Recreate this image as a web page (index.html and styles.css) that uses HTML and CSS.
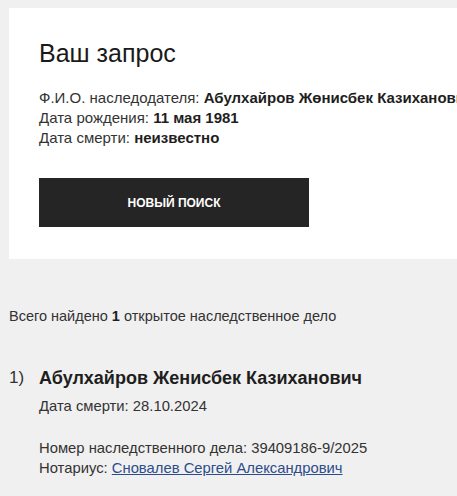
FILE: index.html
```html
<!DOCTYPE html>
<html lang="ru">
<head>
<meta charset="utf-8">
<link rel="stylesheet" href="styles.css">
</head>
<body>
<div class="page">
  <section class="card">
    <h1 class="title">Ваш запрос</h1>
    <div class="query">
      <div>Ф.И.О. наследодателя: <b>Абулхайров Жөнисбек Казиханович</b></div>
      <div>Дата рождения: <b>11 мая 1981</b></div>
      <div>Дата смерти: <b>неизвестно</b></div>
    </div>
    <button class="btn">НОВЫЙ ПОИСК</button>
  </section>
  <p class="total">Всего найдено <b>1</b> открытое наследственное дело</p>
  <ol class="results">
    <li class="item">
      <span class="num">1)</span>
      <div class="info">
        <div class="name">Абулхайров Женисбек Казиханович</div>
        <div class="line">Дата смерти: 28.10.2024</div>
        <div class="case">
          <div class="line">Номер наследственного дела: 39409186-9/2025</div>
          <div class="line">Нотариус: <a href="#" class="link">Сновалев Сергей Александрович</a></div>
        </div>
      </div>
    </li>
  </ol>
</div>
</body>
</html>
```
FILE: styles.css
```css
html, body {
  margin: 0;
  padding: 0;
  overflow: hidden;
}
body {
  background: #f0f0f0;
  font-family: "Liberation Sans", Arial, sans-serif;
  color: #333;
}
b {
  color: #1e1e1e;
}
.page {
  padding: 8px 0 0 9px;
}
.card {
  background: #fff;
  width: 560px;
  padding: 30px 30px 32px;
  box-sizing: border-box;
}
.title {
  margin: 0;
  font-size: 25px;
  font-weight: normal;
  line-height: 30px;
  color: #1a1a1a;
}
.query {
  margin-top: 20px;
  font-size: 15px;
  line-height: 20px;
  white-space: nowrap;
}
.btn {
  display: block;
  margin-top: 30px;
  width: 270px;
  height: 49px;
  background: #252525;
  color: #fff;
  border: 0;
  font-family: inherit;
  font-size: 12px;
  font-weight: bold;
}
.total {
  margin: 47px 0 0;
  font-size: 14.5px;
  line-height: 20px;
}
.results {
  list-style: none;
  margin: 39px 0 0;
  padding: 0;
}
.item {
  display: flex;
}
.num {
  width: 30px;
  font-size: 17px;
  line-height: 26px;
}
.name {
  font-size: 18px;
  font-weight: bold;
  line-height: 26px;
  color: #1e1e1e;
}
.line {
  font-size: 14.8px;
  line-height: 20px;
}
.name + .line {
  margin-top: 5px;
}
.case {
  margin-top: 22px;
}
.link {
  color: #2c4c8c;
}
```
